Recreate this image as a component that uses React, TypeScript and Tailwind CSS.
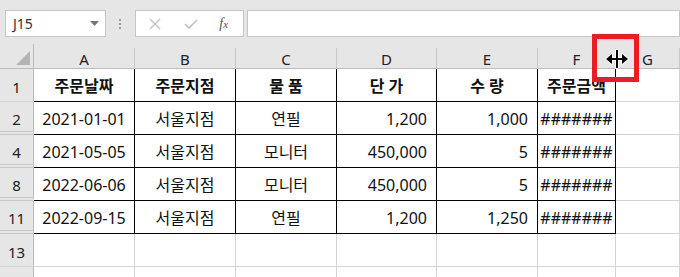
import React from 'react'

type Row = {
  num: string
  hidden?: boolean
  cells: string[]
}

const rows: Row[] = [
  { num: '1', cells: ['주문날짜', '주문지점', '물 품', '단 가', '수 량', '주문금액'] },
  { num: '2', hidden: true, cells: ['2021-01-01', '서울지점', '연필', '1,200', '1,000', '#######'] },
  { num: '4', hidden: true, cells: ['2021-05-05', '서울지점', '모니터', '450,000', '5', '#######'] },
  { num: '8', hidden: true, cells: ['2022-06-06', '서울지점', '모니터', '450,000', '5', '#######'] },
  { num: '11', hidden: true, cells: ['2022-09-15', '서울지점', '연필', '1,200', '1,250', '#######'] },
]

const cols = ['A', 'B', 'C', 'D', 'E', 'F', 'G']

export default function App() {
  return (
    <div className="relative w-[680px] h-[277px] overflow-hidden bg-[#e6e6e6] font-['Noto_Sans','Noto_Sans_CJK_KR',sans-serif]">
      {/* formula bar */}
      <div className="flex h-[44px] items-start pt-[10px]">
        <div className="ml-[5px] flex h-[27px] w-[102px] items-center justify-between border border-[#c6c6c6] bg-white pl-[7px] pr-[6px]">
          <span className="text-[14px] text-[#333]">J15</span>
          <svg width="9" height="5" viewBox="0 0 9 5">
            <path d="M0 0 H9 L4.5 5 Z" fill="#777" />
          </svg>
        </div>
        <div className="flex h-[27px] w-[30px] flex-col items-center justify-center gap-[2px]">
          <span className="h-[2px] w-[2px] bg-[#a0a0a0]" />
          <span className="h-[2px] w-[2px] bg-[#a0a0a0]" />
          <span className="h-[2px] w-[2px] bg-[#a0a0a0]" />
        </div>
        <div className="flex h-[27px] w-[110px] items-center border border-[#c6c6c6] bg-white">
          <svg className="ml-[13px]" width="12" height="12" viewBox="0 0 12 12">
            <path d="M1 1 L11 11 M11 1 L1 11" stroke="#c2c2c2" strokeWidth="1.3" />
          </svg>
          <svg className="ml-[23px]" width="14" height="12" viewBox="0 0 14 12">
            <path d="M1 6 L5 10 L13 2" stroke="#c2c2c2" strokeWidth="1.6" fill="none" />
          </svg>
          <span className="ml-[21px] font-['Liberation_Serif',serif] text-[14px] italic text-[#555]">
            f<span className="text-[11px]">x</span>
          </span>
        </div>
        <div className="ml-[3px] h-[27px] w-[440px] border border-[#c6c6c6] bg-white" />
      </div>

      {/* sheet grid */}
      <div className="grid grid-cols-[34px_101px_101px_101px_100px_101px_78px_64px] grid-rows-[25px_33px_33px_33px_33px_33px_33px_33px]">
        {/* corner */}
        <div className="flex items-end justify-end border-r border-b border-[#bcbcbc] pr-[3px] pb-[3px]">
          <svg width="14" height="14" viewBox="0 0 14 14">
            <path d="M14 0 V14 H0 Z" fill="#b4b4b4" />
          </svg>
        </div>
        {cols.map((c) => (
          <div key={c} className="flex border-b border-[#bcbcbc] pt-[4px]">
            <div className="flex h-full w-full items-center justify-center border-r border-[#c8c8c8] pt-[3px] text-[15px] text-[#222]">
              {c}
            </div>
          </div>
        ))}

        {rows.map((r, ri) => (
          <React.Fragment key={r.num}>
            <div
              className={
                r.hidden
                  ? 'flex items-end justify-center border-r border-b-4 border-double border-r-[#bcbcbc] border-b-[#c8c8c8] pb-[1px] text-[15px] text-[#222]'
                  : 'flex items-end justify-center border-r border-b border-r-[#bcbcbc] border-b-[#d4d4d4] pb-[3px] text-[15px] text-[#222]'
              }
            >
              {r.num}
            </div>
            {r.cells.map((v, ci) => (
              <div
                key={ci}
                className={`flex items-center border-r border-b border-black bg-white pt-[2px] text-[16px] text-[#111] ${
                  ri === 0 ? 'justify-center font-bold' : ci === 3 || ci === 4 ? 'justify-end pr-[9px]' : 'justify-center'
                }`}
              >
                {v}
              </div>
            ))}
            <div className="border-r border-b border-[#d4d4d4] bg-white" />
          </React.Fragment>
        ))}

        {/* row 13 and the partly visible row below it */}
        {['13', ''].map((n, i) => (
          <React.Fragment key={i}>
            <div className="flex items-end justify-center border-r border-b border-r-[#bcbcbc] border-b-[#d4d4d4] pb-[3px] text-[15px] text-[#222]">
              {n}
            </div>
            {cols.map((c) => (
              <div key={c} className="border-r border-b border-[#d4d4d4] bg-white" />
            ))}
          </React.Fragment>
        ))}
      </div>

      {/* highlight box + resize cursor */}
      <div className="absolute left-[592px] top-[34px] h-[48px] w-[47px] border-[5px] border-[#ed1c24]" />
      <svg className="absolute left-[605px] top-[48px]" width="24" height="22" viewBox="0 0 24 22">
        <g stroke="#fff" strokeWidth="2" strokeLinejoin="round">
          <rect x="11" y="2" width="2" height="18" />
          <rect x="5" y="10" width="14" height="2" />
          <polygon points="1,11 7,6 7,16" />
          <polygon points="23,11 17,6 17,16" />
        </g>
        <rect x="11" y="2" width="2" height="18" fill="#000" />
        <rect x="5" y="10" width="14" height="2" fill="#000" />
        <polygon points="1,11 7,6 7,16" fill="#000" />
        <polygon points="23,11 17,6 17,16" fill="#000" />
      </svg>
    </div>
  )
}
